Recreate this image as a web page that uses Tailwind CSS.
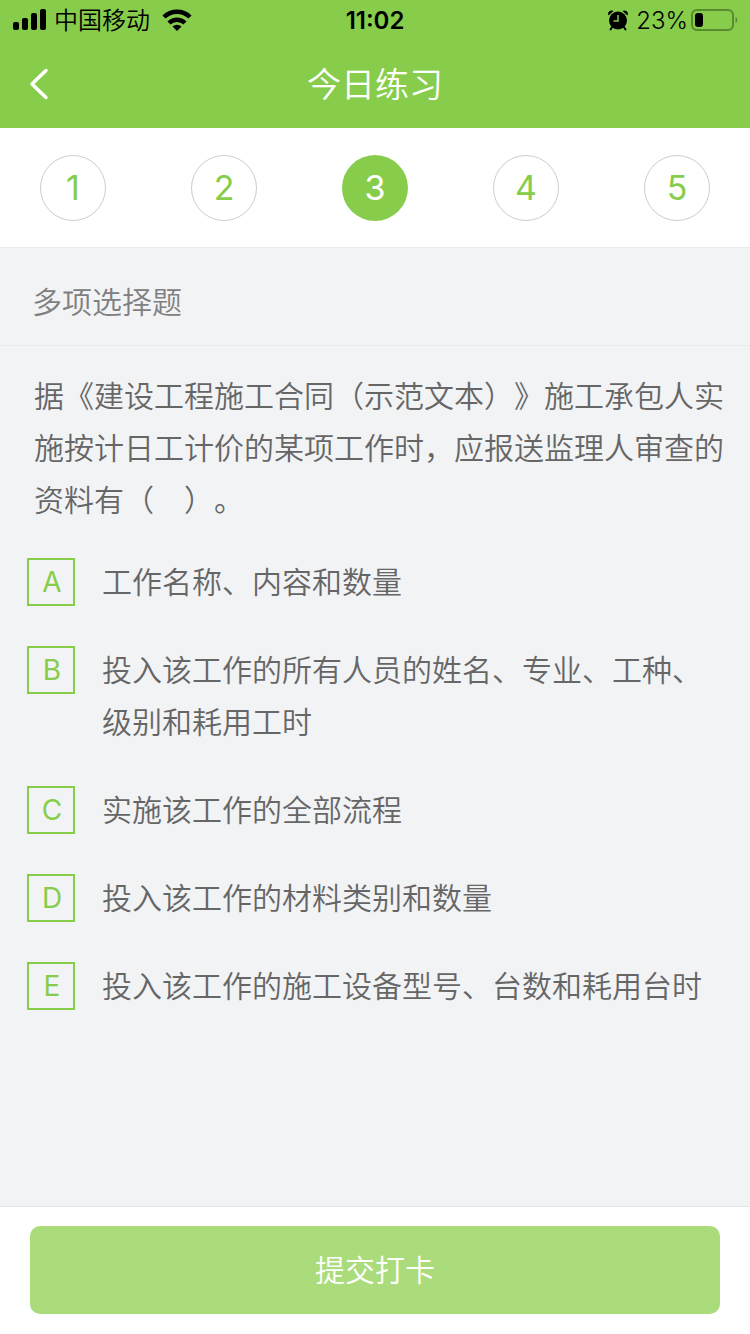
<!DOCTYPE html>
<html lang="zh-CN">
<head>
  <meta charset="UTF-8" />
  <meta name="viewport" content="width=device-width, initial-scale=1.0" />
  <title>今日练习</title>
  <script src="https://cdn.jsdelivr.net/npm/@tailwindcss/browser@4"></script>
</head>
<body class="min-h-screen flex flex-col bg-[#f2f3f5] text-[#666666] font-[350] font-['Inter','Noto_Sans_CJK_SC',sans-serif] [text-spacing-trim:space-all]">
  <header class="bg-[#87cd4b]">
    <!-- status bar -->
    <div class="h-10 px-3 pt-0.5 grid grid-cols-[1fr_auto_1fr] items-center text-2xl leading-[38px] text-black">
      <div class="flex items-center">
        <svg class="w-[34px] h-6 mr-2" viewBox="0 0 34 24">
          <rect x="1" y="13" width="6" height="8" rx="2" />
          <rect x="10" y="9" width="6" height="12" rx="2" />
          <rect x="19" y="4" width="6" height="17" rx="2" />
          <rect x="28" y="0" width="6" height="21" rx="2" />
        </svg>
        <span>中国移动</span>
        <svg class="w-[30px] h-6 ml-3" viewBox="0 0 30 24">
          <path d="M2 8a18.500 18.500 0 0 1 26 0M7 14a11.500 11.500 0 0 1 16 0" fill="none" stroke="#000" stroke-width="4.500" />
          <path d="M15 22l-4.500-4.500a6.500 6.500 0 0 1 9 0z" />
        </svg>
      </div>
      <span class="font-semibold">11:02</span>
      <div class="flex items-center justify-end">
        <svg class="w-5 h-[22px] mr-2" viewBox="0 0 20 22">
          <circle cx="10" cy="10.500" r="9" />
          <path d="M.5 5.500a3.500 3.500 0 0 1 5-4.500zM19.500 5.500a3.500 3.500 0 0 0-5-4.500z" />
          <path d="M4.500 16.500l-2 3M15.500 16.500l2 3" stroke="#000" stroke-width="2" stroke-linecap="round" />
          <path d="M10 5v6H5.500" fill="none" stroke="#87cd4b" stroke-width="1.500" />
        </svg>
        <span>23%</span>
        <svg class="w-12 h-6 ml-0.5" viewBox="0 0 48 24">
          <rect x="2" y="1" width="41" height="20" rx="5" fill="none" stroke="#5a8a30" stroke-width="2" />
          <rect x="5" y="4" width="8" height="14" rx="3" />
          <path d="M45.500 8c2.500 1 2.500 5 0 6z" fill="#5a8a30" />
        </svg>
      </div>
    </div>
    <!-- title bar -->
    <div class="h-[88px] px-7 grid grid-cols-[1fr_auto_1fr] items-center text-white">
      <a href="#" aria-label="返回" class="w-6">
        <svg class="w-6 h-8" viewBox="0 0 24 32" fill="none" stroke="#fff" stroke-width="3.500" stroke-linecap="round" stroke-linejoin="round">
          <path d="M18 2.500L4 16l14 13.500" />
        </svg>
      </a>
      <h1 class="text-[34px] font-[350]">今日练习</h1>
    </div>
  </header>

  <nav class="h-[120px] px-10 flex items-center justify-between bg-white border-b border-[#ebebeb] text-[34px] font-normal text-[#87cd4b]">
    <button class="size-[66px] rounded-full border border-[#cccccc]">1</button>
    <button class="size-[66px] rounded-full border border-[#cccccc]">2</button>
    <button class="size-[66px] rounded-full bg-[#87cd4b] text-white" aria-current="step">3</button>
    <button class="size-[66px] rounded-full border border-[#cccccc]">4</button>
    <button class="size-[66px] rounded-full border border-[#cccccc]">5</button>
  </nav>

  <main class="flex-1 text-[30px] leading-[52px]">
    <h2 class="px-8 pt-7 pb-[17px] text-[#808080] font-[350] border-b border-[#e9eaec]">多项选择题</h2>

    <form id="quiz" class="pt-6 pb-10">
      <p class="pl-[34px] pr-6">据《建设工程施工合同（示范文本）》施工承包人实施按计日工计价的某项工作时，应报送监理人审查的资料有（　）。</p>

      <div class="mt-[30px] pl-[27px] pr-8 flex flex-col gap-9">
        <label class="flex items-start gap-[27px]">
          <span class="grid shrink-0 mt-0.5 size-12 place-items-center text-[#87cd4b]">
            <input type="checkbox" name="answer" value="A" class="col-start-1 row-start-1 size-12 appearance-none border-2 border-[#87cd4b]" />
            <span class="col-start-1 row-start-1 pl-0.5 text-[28px] leading-12 font-normal">A</span>
          </span>
          <span>工作名称、内容和数量</span>
        </label>
        <label class="flex items-start gap-[27px]">
          <span class="grid shrink-0 mt-0.5 size-12 place-items-center text-[#87cd4b]">
            <input type="checkbox" name="answer" value="B" class="col-start-1 row-start-1 size-12 appearance-none border-2 border-[#87cd4b]" />
            <span class="col-start-1 row-start-1 pl-0.5 text-[28px] leading-12 font-normal">B</span>
          </span>
          <span>投入该工作的所有人员的姓名、专业、工种、级别和耗用工时</span>
        </label>
        <label class="flex items-start gap-[27px]">
          <span class="grid shrink-0 mt-0.5 size-12 place-items-center text-[#87cd4b]">
            <input type="checkbox" name="answer" value="C" class="col-start-1 row-start-1 size-12 appearance-none border-2 border-[#87cd4b]" />
            <span class="col-start-1 row-start-1 pl-0.5 text-[28px] leading-12 font-normal">C</span>
          </span>
          <span>实施该工作的全部流程</span>
        </label>
        <label class="flex items-start gap-[27px]">
          <span class="grid shrink-0 mt-0.5 size-12 place-items-center text-[#87cd4b]">
            <input type="checkbox" name="answer" value="D" class="col-start-1 row-start-1 size-12 appearance-none border-2 border-[#87cd4b]" />
            <span class="col-start-1 row-start-1 pl-0.5 text-[28px] leading-12 font-normal">D</span>
          </span>
          <span>投入该工作的材料类别和数量</span>
        </label>
        <label class="flex items-start gap-[27px]">
          <span class="grid shrink-0 mt-0.5 size-12 place-items-center text-[#87cd4b]">
            <input type="checkbox" name="answer" value="E" class="col-start-1 row-start-1 size-12 appearance-none border-2 border-[#87cd4b]" />
            <span class="col-start-1 row-start-1 pl-0.5 text-[28px] leading-12 font-normal">E</span>
          </span>
          <span>投入该工作的施工设备型号、台数和耗用台时</span>
        </label>
      </div>
    </form>
  </main>

  <footer class="px-[30px] pt-[19px] pb-5 bg-white border-t border-[#e6e6e6]">
    <button type="submit" form="quiz" class="w-full h-[88px] rounded-[10px] bg-[#aadc7b] text-white text-[30px]">提交打卡</button>
  </footer>
</body>
</html>
